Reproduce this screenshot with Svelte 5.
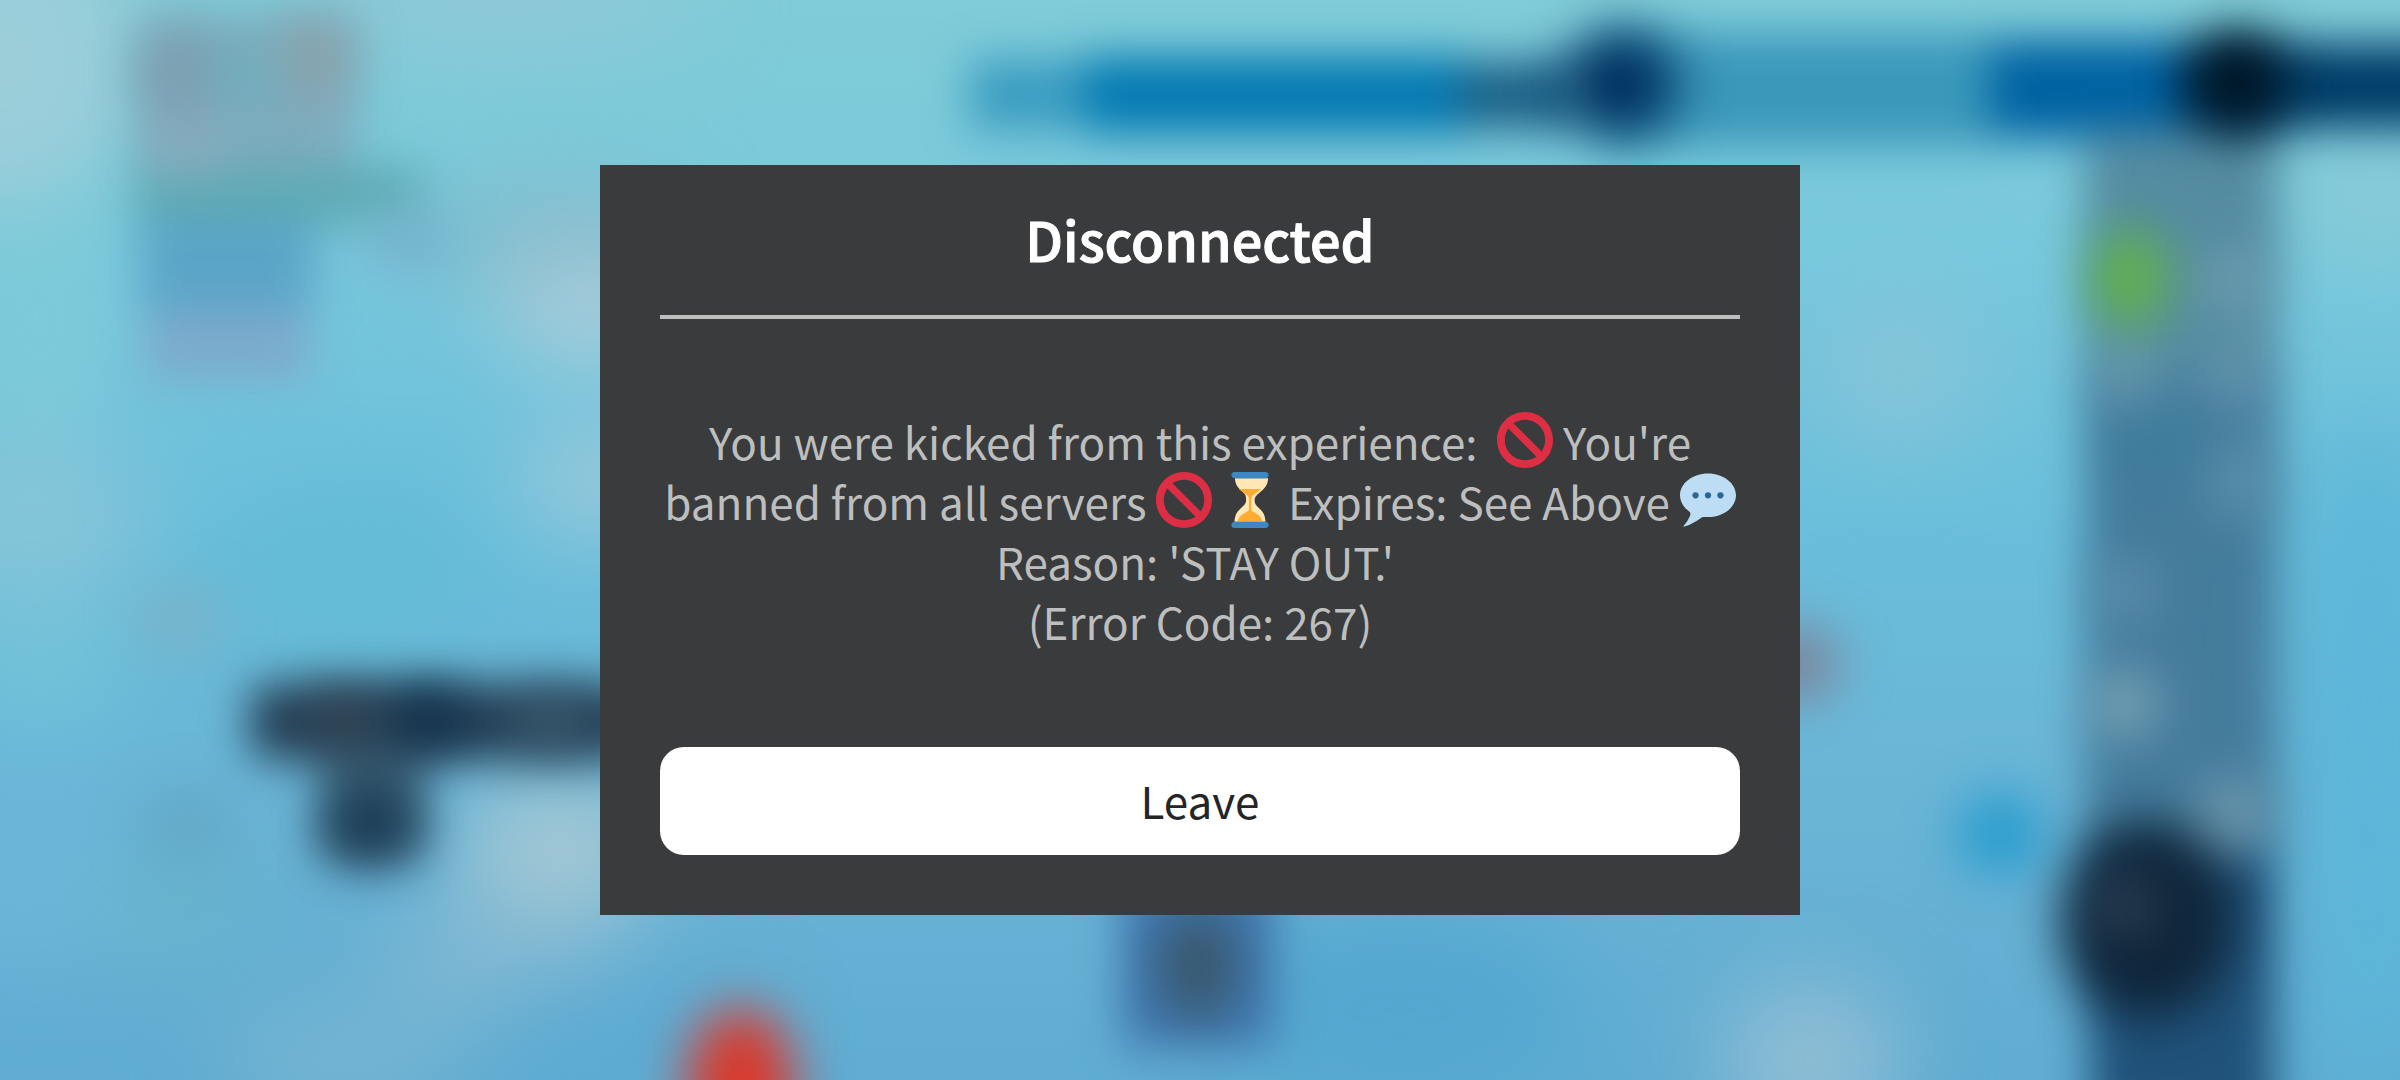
<script lang="ts">
	type Patch = { x: number; y: number; rx: number; ry: number; fill: string };
	type Block = { x: number; y: number; w: number; h: number; r?: number; fill: string };

	let open = $state(true);

	// wide colour washes of the water behind the dialog
	const washes: Patch[] = [
		{ x: 0, y: 60, rx: 140, ry: 150, fill: '#9bced9' },
		{ x: 500, y: 0, rx: 200, ry: 50, fill: '#90c8d8' },
		{ x: 40, y: 320, rx: 90, ry: 120, fill: '#7ccad9' },
		{ x: 30, y: 520, rx: 120, ry: 90, fill: '#84c4d8' },
		{ x: 560, y: 240, rx: 120, ry: 60, fill: '#86bccc' },
		{ x: 590, y: 310, rx: 90, ry: 50, fill: '#acccda' },
		{ x: 600, y: 480, rx: 80, ry: 60, fill: '#98c8da' },
		{ x: 350, y: 570, rx: 120, ry: 90, fill: '#64bcd6' },
		{ x: 40, y: 660, rx: 90, ry: 70, fill: '#72c2d8' },
		{ x: 30, y: 850, rx: 110, ry: 110, fill: '#6ab6da' },
		{ x: 170, y: 900, rx: 80, ry: 60, fill: '#68b4cc' },
		{ x: 560, y: 850, rx: 100, ry: 75, fill: '#a4c8d4' },
		{ x: 500, y: 960, rx: 120, ry: 60, fill: '#80b8d2' },
		{ x: 340, y: 1060, rx: 120, ry: 60, fill: '#74b4d2' },
		{ x: 620, y: 1040, rx: 140, ry: 60, fill: '#5caad2' },
		{ x: 1400, y: 1010, rx: 180, ry: 100, fill: '#54a8d0' },
		{ x: 1900, y: 370, rx: 80, ry: 80, fill: '#84c4d8' },
		{ x: 2380, y: 190, rx: 100, ry: 60, fill: '#88cad8' },
		{ x: 1810, y: 1060, rx: 90, ry: 80, fill: '#90bed4' },
		{ x: 2370, y: 760, rx: 80, ry: 340, fill: '#5cb6d8' }
	];

	// interface elements of the game, out of focus
	const blocks: Block[] = [
		{ x: 140, y: 20, w: 215, h: 160, fill: '#7eacbe' },
		{ x: 135, y: 168, w: 285, h: 58, fill: '#5eaab4' },
		{ x: 140, y: 222, w: 175, h: 88, fill: '#5aa5c8' },
		{ x: 145, y: 310, w: 165, h: 70, fill: '#7caacc' },
		{ x: 970, y: 60, w: 130, h: 70, fill: '#3a9cc0' },
		{ x: 1085, y: 56, w: 380, h: 78, fill: '#047ab2' },
		{ x: 1460, y: 62, w: 120, h: 66, fill: '#1a5f86' },
		{ x: 1600, y: 34, w: 390, h: 112, fill: '#3a98ba' },
		{ x: 1990, y: 40, w: 190, h: 98, fill: '#0062a2' },
		{ x: 2180, y: 44, w: 300, h: 84, fill: '#003c68' },
		{ x: 250, y: 684, w: 390, h: 76, r: 20, fill: '#243e54' },
		{ x: 322, y: 740, w: 102, h: 120, r: 20, fill: '#3a5e74' },
		{ x: 1122, y: 880, w: 152, h: 166, fill: '#4076ae' },
		{ x: 2085, y: 130, w: 192, h: 240, fill: '#548ca2' },
		{ x: 2085, y: 370, w: 192, h: 480, fill: '#447c9c' },
		{ x: 2090, y: 850, w: 184, h: 300, fill: '#20527a' }
	];

	const spots: Patch[] = [
		{ x: 178, y: 72, rx: 36, ry: 44, fill: '#7c9dae' },
		{ x: 314, y: 58, rx: 36, ry: 44, fill: '#8aa2aa' },
		{ x: 245, y: 75, rx: 28, ry: 34, fill: '#6cb0c0' },
		{ x: 185, y: 145, rx: 36, ry: 26, fill: '#8aacbe' },
		{ x: 410, y: 240, rx: 48, ry: 32, fill: '#76b2cc' },
		{ x: 1620, y: 84, rx: 58, ry: 52, fill: '#00305f' },
		{ x: 2238, y: 82, rx: 48, ry: 50, fill: '#001422' },
		{ x: 428, y: 718, rx: 38, ry: 28, fill: '#0e2c48' },
		{ x: 345, y: 718, rx: 32, ry: 28, fill: '#34434e' },
		{ x: 550, y: 722, rx: 32, ry: 28, fill: '#3e5e72' },
		{ x: 370, y: 824, rx: 44, ry: 36, fill: '#163650' },
		{ x: 180, y: 620, rx: 40, ry: 30, fill: '#7cb2c4' },
		{ x: 186, y: 826, rx: 44, ry: 34, fill: '#62a8c6' },
		{ x: 741, y: 1086, rx: 54, ry: 78, fill: '#da382a' },
		{ x: 1198, y: 965, rx: 38, ry: 56, fill: '#385668' },
		{ x: 1796, y: 664, rx: 42, ry: 36, fill: '#7e7e94' },
		{ x: 2000, y: 834, rx: 42, ry: 38, fill: '#209acc' },
		{ x: 2130, y: 278, rx: 38, ry: 50, fill: '#62b448' },
		{ x: 2234, y: 280, rx: 28, ry: 28, fill: '#78a2b4' },
		{ x: 2128, y: 375, rx: 30, ry: 24, fill: '#72a4b4' },
		{ x: 2234, y: 375, rx: 30, ry: 26, fill: '#6c9cb2' },
		{ x: 2161, y: 440, rx: 40, ry: 30, fill: '#3c7c9c' },
		{ x: 2240, y: 480, rx: 26, ry: 38, fill: '#6096ae' },
		{ x: 2124, y: 590, rx: 30, ry: 28, fill: '#6294b0' },
		{ x: 2125, y: 704, rx: 32, ry: 34, fill: '#80a8b8' },
		{ x: 2232, y: 814, rx: 34, ry: 34, fill: '#749cb0' },
		{ x: 2148, y: 920, rx: 86, ry: 98, fill: '#0e2438' },
		{ x: 2125, y: 905, rx: 30, ry: 30, fill: '#304458' }
	];
</script>

{#snippet banned()}
	<svg class="emoji" viewBox="0 0 36 36" role="img" aria-label="prohibited">
		<path
			fill="#dd2e44"
			d="M18 0C8 0 0 8 0 18s8 18 18 18 18-8 18-18S28 0 18 0zm13 18c0 2.700-.9 5.300-2.300 7.400L10.600 7.300C12.700 5.900 15.300 5 18 5c7.200 0 13 5.800 13 13zM5 18c0-2.700.9-5.300 2.300-7.400l18.100 18.100C23.300 30.100 20.700 31 18 31 10.800 31 5 25.200 5 18z"
		/>
	</svg>
{/snippet}

{#snippet hourglass()}
	<svg class="emoji" viewBox="0 0 36 36" role="img" aria-label="hourglass">
		<path
			fill="#ffe8b6"
			d="M21 18c0-2.200 1.500-3.200 4-5.400 3.500-3 4.400-5 4.700-8.600H8.300c.3 3.600 1.200 5.600 4.700 8.600 2.500 2.200 2.500 3.200 2.500 5.400s-1 3.200-3.500 5.400c-3 2.600-3.700 5-4 8.600h20c-.3-3.600-1-6-4-8.600-2.500-2.200-3-3.200-3-5.400z"
		/>
		<path
			fill="#ffac33"
			d="M17.300 17v7c0 1-1 1.500-3 2.500-2.500 1.300-4 3.300-4.300 5.500h16c-.3-2.200-1.800-4.200-4.300-5.500-2-1-3-1.500-3-2.500v-7c0-1.500 1.500-2.500 3.800-4 1.200-.8 2.200-1.700 2.500-2H11c.3.300 1.300 1.200 2.500 2 2.300 1.500 3.800 2.500 3.800 4z"
		/>
		<path
			fill="#3b88c3"
			d="M30 2c0 1.100-.9 2-2 2H8C6.900 4 6 3.100 6 2s.9-2 2-2h20c1.100 0 2 .9 2 2zm0 32c0 1.100-.9 2-2 2H8c-1.100 0-2-.9-2-2s.9-2 2-2h20c1.100 0 2 .9 2 2z"
		/>
	</svg>
{/snippet}

{#snippet speech()}
	<svg class="emoji" viewBox="0 0 36 36" role="img" aria-label="speech bubble">
		<path
			fill="#bdddf4"
			d="M18 1C8.060 1 0 7.270 0 15c0 4.100 2.300 7.800 5.900 10.400.8.600 1 1.600.6 2.600-.9 2.400-2.500 4.700-4.100 6.600-.3.400 0 .7.500.5 4-1.400 7.600-3.500 10.600-5.600.5-.4 1-.6 1.600-.6.900.1 1.900.1 2.900.1 9.940 0 18-6.270 18-14S27.940 1 18 1z"
		/>
		<g fill="#2a6797">
			<circle cx="10" cy="15" r="2" />
			<circle cx="18" cy="15" r="2" />
			<circle cx="26" cy="15" r="2" />
		</g>
	</svg>
{/snippet}

<div class="screen">
	<svg class="backdrop" viewBox="0 0 2400 1080" preserveAspectRatio="none" aria-hidden="true">
		<defs>
			<linearGradient id="water" x1="0" y1="0" x2="0" y2="1">
				<stop offset="0" stop-color="#80ccd8" />
				<stop offset="0.25" stop-color="#78c8dc" />
				<stop offset="0.5" stop-color="#6abedb" />
				<stop offset="0.75" stop-color="#6ab4d6" />
				<stop offset="1" stop-color="#60acd2" />
			</linearGradient>
			<filter id="wash" x="-20%" y="-20%" width="140%" height="140%" color-interpolation-filters="sRGB">
				<feGaussianBlur stdDeviation="44" />
			</filter>
			<filter id="soft" x="-20%" y="-20%" width="140%" height="140%" color-interpolation-filters="sRGB">
				<feGaussianBlur stdDeviation="22" />
			</filter>
			<filter id="softer" x="-20%" y="-20%" width="140%" height="140%" color-interpolation-filters="sRGB">
				<feGaussianBlur stdDeviation="26" />
			</filter>
		</defs>
		<rect width="2400" height="1080" fill="url(#water)" />
		<g filter="url(#wash)">
			{#each washes as { x, y, rx, ry, fill }}
				<ellipse cx={x} cy={y} {rx} {ry} {fill} />
			{/each}
		</g>
		<g filter="url(#soft)">
			{#each blocks as { x, y, w, h, r, fill }}
				<rect {x} {y} width={w} height={h} rx={r ?? 0} {fill} />
			{/each}
		</g>
		<g filter="url(#softer)">
			{#each spots as { x, y, rx, ry, fill }}
				<ellipse cx={x} cy={y} {rx} {ry} {fill} />
			{/each}
		</g>
	</svg>

	{#if open}
		<div class="dialog" role="alertdialog" aria-labelledby="title" aria-describedby="message">
			<h1 id="title">Disconnected</h1>
			<hr />
			<p id="message" class="message">
				You were kicked from this experience:&nbsp; {@render banned()} You're<br />
				banned from all servers {@render banned()} {@render hourglass()} Expires: See Above {@render speech()}<br />
				Reason: 'STAY OUT.'&nbsp;<br />
				(Error Code: 267)
			</p>
			<button type="button" onclick={() => (open = false)}>Leave</button>
		</div>
	{/if}
</div>

<style>
	:global(body) {
		margin: 0;
	}

	.screen {
		position: relative;
		display: flex;
		align-items: center;
		justify-content: center;
		min-height: 100vh;
		overflow: hidden;
		font-family: 'Noto Sans CJK SC', 'Open Sans', sans-serif;
	}

	.backdrop {
		position: absolute;
		inset: 0;
		width: 100%;
		height: 100%;
	}

	.dialog {
		position: relative;
		box-sizing: border-box;
		display: flex;
		flex-direction: column;
		width: 50%;
		min-width: 1200px;
		padding: 38px 60px 60px;
		background-color: #393b3d;
		text-align: center;
	}

	h1 {
		margin: 0 0 40px;
		color: #ffffff;
		font-size: 54px;
		font-weight: 500;
		line-height: 72px;
		-webkit-text-stroke: 1px #ffffff;
	}

	hr {
		width: 100%;
		height: 4px;
		margin: 0;
		border: 0;
		background-color: #bdbebe;
	}

	.message {
		margin: 92px 0 96px;
		color: #bdbebe;
		font-size: 44px;
		line-height: 60px;
		white-space: nowrap;
	}

	.emoji {
		width: 56px;
		height: 56px;
		vertical-align: -8px;
	}

	button {
		height: 108px;
		padding: 0 24px 2px;
		border: 0;
		border-radius: 24px;
		background-color: #ffffff;
		color: #232527;
		font-family: inherit;
		font-size: 44px;
		line-height: 60px;
		cursor: pointer;
	}
</style>
